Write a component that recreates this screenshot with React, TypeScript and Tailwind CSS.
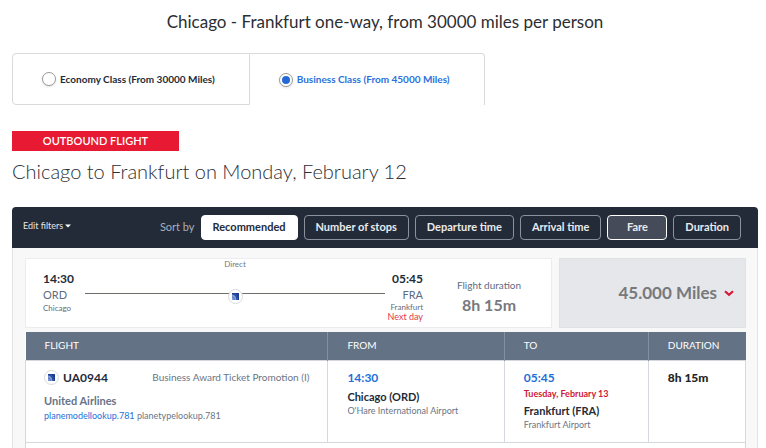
import React, { useState } from 'react';

const CLASSES = [
  { id: 'economy', label: 'Economy Class (From 30000 Miles)' },
  { id: 'business', label: 'Business Class (From 45000 Miles)' },
];

const SORTS = ['Recommended', 'Number of stops', 'Departure time', 'Arrival time', 'Fare', 'Duration'];

const AirlineLogo: React.FC = () => (
  <span className="inline-flex items-center justify-center w-[15px] h-[15px] shrink-0 rounded-full bg-white border border-[#d9dadd]">
    <svg width="7" height="7" viewBox="0 0 7 7" aria-hidden="true">
      <rect width="7" height="7" fill="#1c3c94" />
      <path d="M0 1.5C2.5 1.5 4 3 4.5 7H0z" fill="#7f9ad6" />
      <path d="M0 4C1.5 4 2.2 5 2.5 7M2 .5C4.5 1.5 5.4 4 5.5 7" stroke="#4166b8" strokeWidth=".7" fill="none" />
    </svg>
  </span>
);

const ClassTabs: React.FC = () => {
  const [selected, setSelected] = useState('business');

  return (
    <div className="flex h-[52px] w-fit">
      {CLASSES.map((item, i) => (
        <label
          key={item.id}
          className={`flex items-center border-t border-[#d8dadd] pl-[29px] pr-[34px] gap-1 text-[10px] font-bold cursor-pointer ${
            i === 0 ? 'border-l rounded-tl' : 'rounded-tr'
          } ${selected === item.id ? 'text-[#2b6fdc] border-r' : 'text-[#232b38] border-b border-r rounded-bl'}`}
        >
          <input
            type="radio"
            name="cabin"
            checked={selected === item.id}
            onChange={() => setSelected(item.id)}
            className="appearance-none flex items-center justify-center w-[14px] h-[14px] rounded-full border border-[#9b9b9b] bg-white shadow-sm checked:before:block checked:before:w-[8px] checked:before:h-[8px] checked:before:rounded-full checked:before:bg-[#2468d8]"
          />
          {item.label}
        </label>
      ))}
    </div>
  );
};

const SortBar: React.FC = () => (
  <div className="flex items-center h-[41px] bg-[#232b39] rounded-t pl-[11px] pr-[17px]">
    <button className="flex items-center gap-[2px] text-[9px] pb-1 text-[#e3e5e8]">
      Edit filters
      <svg width="6" height="4" viewBox="0 0 6 4" aria-hidden="true">
        <path d="M0 .5h6L3 3.5z" fill="#fff" />
      </svg>
    </button>
    <div className="ml-auto flex items-center gap-[6px]">
      <span className="text-[11px] text-[#a9aeb8]">Sort by</span>
      {SORTS.map((name) => (
        <button
          key={name}
          className={`h-[25px] px-[11px] rounded border text-[11px] font-bold whitespace-nowrap ${
            name === 'Recommended'
              ? 'bg-white border-white text-[#232b39]'
              : name === 'Fare'
                ? 'bg-[#454b59] border-white text-[#e9eaec] min-w-[60px]'
                : 'border-[#8c919b] text-[#e9eaec]'
          }`}
        >
          {name}
        </button>
      ))}
    </div>
  </div>
);

const FlightSummary: React.FC = () => (
  <div className="flex gap-[7px] h-[70px]">
    <div className="flex flex-1 bg-white border border-[#ececee] pl-[17px]">
      <div className="w-[42px] pt-3 text-[#5f6c80] whitespace-nowrap">
        <div className="text-xs leading-4 font-bold text-[#232b38]">14:30</div>
        <div className="text-[11px] leading-4">ORD</div>
        <div className="text-[8px] leading-[10px]">Chicago</div>
      </div>
      {/* Route line */}
      <div className="relative flex-1 text-center">
        <div className="text-[8px] leading-[10px] text-[#6f7988]">Direct</div>
        <div className="mt-6 border-t border-[#6b6f68]" />
        <div className="absolute inset-x-0 top-[30px] flex justify-center">
          <AirlineLogo />
        </div>
      </div>
      <div className="w-[38px] pt-3 flex flex-col items-end text-[#5f6c80] whitespace-nowrap">
        <div className="text-xs leading-4 font-bold text-[#232b38]">05:45</div>
        <div className="text-[11px] leading-4">FRA</div>
        <div className="text-[8px] leading-[9px]">Frankfurt</div>
        <div className="text-[9px] leading-[9px] text-[#e0394b]">Next day</div>
      </div>
      <div className="w-[128px] pl-1 pt-[18px] text-center">
        <div className="text-[10px] leading-4 text-[#5f6c80]">Flight duration</div>
        <div className="text-base leading-6 font-bold text-[#77797c]">8h 15m</div>
      </div>
    </div>
    <button className="flex items-center justify-end gap-[7px] w-[187px] pr-[11px] bg-[#e6e7eb] border border-[#e0e1e5] text-[17px] font-bold text-[#77797c]">
      45.000 Miles
      <svg width="10" height="7" viewBox="0 0 10 7" aria-hidden="true">
        <path d="M1 1.2l4 3.6 4-3.6" stroke="#d6173a" strokeWidth="2.2" fill="none" />
      </svg>
    </button>
  </div>
);

const FlightTable: React.FC = () => (
  <table className="w-full table-fixed border-collapse bg-white text-left">
    <thead>
      <tr className="h-7 bg-[#647286] text-white text-[10px]">
        <th className="w-[42%] pl-[19px] font-normal">FLIGHT</th>
        <th className="w-[24.5%] pl-[19px] font-normal border-l border-[#8490a0]">FROM</th>
        <th className="w-[20%] pl-[19px] font-normal border-l border-[#8490a0]">TO</th>
        <th className="pl-[19px] font-normal border-l border-[#8490a0]">DURATION</th>
      </tr>
    </thead>
    <tbody>
      <tr className="h-[82px] align-top">
        <td className="border border-[#d5d8dc] pl-[18px] pr-[18px] pt-[9px]">
          <div className="flex items-center justify-between h-4 whitespace-nowrap">
            <span className="flex items-center gap-1 text-xs font-bold text-[#232b38]">
              <AirlineLogo />
              UA0944
            </span>
            <span className="text-[10px] text-[#6b7585]">Business Award Ticket Promotion (I)</span>
          </div>
          <div className="mt-2 text-[11px] leading-[14px] font-bold text-[#66738a]">United Airlines</div>
          <div className="text-[9px] leading-4 text-[#6b7585]">
            <a href="#" className="text-[#1e6fd8]">planemodellookup.781</a> planetypelookup.781
          </div>
        </td>
        <td className="border border-[#d5d8dc] pl-[19px] pt-[9px]">
          <div className="text-xs leading-4 font-bold text-[#1e6fd8]">14:30</div>
          <div className="mt-1 text-[11px] leading-[14px] font-bold text-[#232b38]">Chicago (ORD)</div>
          <div className="text-[9px] leading-[14px] text-[#6b7585]">O'Hare International Airport</div>
        </td>
        <td className="border border-[#d5d8dc] pl-[19px] pt-[9px]">
          <div className="text-xs leading-4 font-bold text-[#1e6fd8]">05:45</div>
          <div className="text-[9px] leading-4 font-bold text-[#cf1736]">Tuesday, February 13</div>
          <div className="mt-[2px] text-[11px] leading-[14px] font-bold text-[#232b38]">Frankfurt (FRA)</div>
          <div className="text-[9px] leading-[14px] text-[#6b7585]">Frankfurt Airport</div>
        </td>
        <td className="border border-[#d5d8dc] pl-[19px] pt-[9px]">
          <div className="text-xs leading-4 font-black text-[#232323]">8h 15m</div>
        </td>
      </tr>
    </tbody>
  </table>
);

export default function App() {
  return (
    <main className="min-h-screen flex flex-col bg-white pl-3 pr-2 font-[Lato,sans-serif]">
      <h1 className="pt-[10px] mb-[19px] text-center text-[17px] leading-6 text-[#2b2e33]">
        Chicago - Frankfurt one-way, from 30000 miles per person
      </h1>
      <ClassTabs />
      <div className="mt-[26px] w-[167px] h-5 bg-[#e81932] text-center text-[11px] leading-5 font-semibold text-white">
        OUTBOUND FLIGHT
      </div>
      <h2 className="mt-1 mb-5 text-xl leading-8 font-light text-[#2b2e33]">
        Chicago to Frankfurt on Monday, February 12
      </h2>
      <section className="flex flex-col flex-1">
        <SortBar />
        <div className="flex flex-col flex-1 gap-1 border-x border-[#e2e3e5] bg-[#f8f8f8] pt-[10px] pl-3 pr-[11px]">
          <FlightSummary />
          <div className="flex flex-col flex-1">
            <FlightTable />
            <div className="flex-1 border-x border-[#d5d8dc] bg-white" />
          </div>
        </div>
      </section>
    </main>
  );
}
